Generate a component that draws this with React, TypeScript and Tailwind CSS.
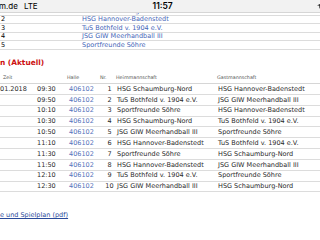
export default function App() {
  const top = [
    { n: "2", t: "HSG Hannover-Badenstedt" },
    { n: "3", t: "TuS Bothfeld v. 1904 e.V." },
    { n: "4", t: "JSG GIW Meerhandball III" },
    { n: "5", t: "Sportfreunde Söhre" },
  ];
  const games = [
    ["01.2018", "09:30", "406102", "1", "HSG Schaumburg-Nord", "HSG Hannover-Badenstedt"],
    ["", "09:50", "406102", "2", "TuS Bothfeld v. 1904 e.V.", "JSG GIW Meerhandball III"],
    ["", "10:10", "406102", "3", "Sportfreunde Söhre", "HSG Hannover-Badenstedt"],
    ["", "10:30", "406102", "4", "HSG Schaumburg-Nord", "TuS Bothfeld v. 1904 e.V."],
    ["", "10:50", "406102", "5", "JSG GIW Meerhandball III", "Sportfreunde Söhre"],
    ["", "11:10", "406102", "6", "HSG Hannover-Badenstedt", "TuS Bothfeld v. 1904 e.V."],
    ["", "11:30", "406102", "7", "Sportfreunde Söhre", "HSG Schaumburg-Nord"],
    ["", "11:50", "406102", "8", "HSG Hannover-Badenstedt", "JSG GIW Meerhandball III"],
    ["", "12:10", "406102", "9", "TuS Bothfeld v. 1904 e.V.", "Sportfreunde Söhre"],
    ["", "12:30", "406102", "10", "JSG GIW Meerhandball III", "HSG Schaumburg-Nord"],
  ];
  return (
    <div className="w-[320px] h-[240px] overflow-hidden bg-white font-['DejaVu_Sans',sans-serif] text-[#2a2a2a]">
      {/* status bar */}
      <div className="w-full h-[12.5px] bg-[#f2f2f2] border-b border-[#d6d6d6] flex items-center font-['Inter',sans-serif] text-black">
        <span className="text-[8px] leading-none ml-[-1px]">m.de</span>
        <span className="text-[8px] leading-none ml-[6px]">LTE</span>
        <span className="text-[8.5px] font-semibold leading-none ml-[115px]">11:57</span>
        <svg className="ml-auto mr-[-2px]" width="5" height="6" viewBox="0 0 5 6">
          <path d="M5 0 L0 2.6 L2.4 2.6 L2.4 6 Z" fill="#000" />
        </svg>
      </div>

      {/* partially scrolled-away first row */}
      <div className="h-[3px] overflow-hidden border-b border-[#dcdcdc]">
        <div className="mt-[-5px] h-[7px] flex items-center text-[6.5px] leading-none">
          <span className="w-[82px] pl-[1px] text-black">1</span>
          <span className="text-[#4565b8]">HSG Schaumburg-Nord</span>
        </div>
      </div>
      {top.map((r) => (
        <div key={r.n} className="h-[8.5px] border-b border-[#dcdcdc] flex items-center text-[6.5px] leading-none">
          <span className="w-[82px] pl-[1px] text-black">{r.n}</span>
          <span className="text-[#4565b8]">{r.t}</span>
        </div>
      ))}

      <div className="mt-[9px] h-[9px] flex items-center text-[7.4px] font-bold leading-none text-[#cc1111]">
        n (Aktuell)
      </div>

      <div className="mt-[5.5px] h-[11px] border-b border-[#d6d6d6] flex items-center text-[4.8px] leading-none text-[#555]">
        <span className="w-[67px] pl-[3px]">Zeit</span>
        <span className="w-[33px]">Halle</span>
        <span className="w-[16px]">Nr.</span>
        <span className="w-[101px]">Heimmannschaft</span>
        <span>Gastmannschaft</span>
      </div>

      {games.map((g) => (
        <div key={g[3]} className="h-[10.85px] border-b border-[#dcdcdc] flex items-center text-[6.5px] leading-none">
          <span className="w-[37px]">{g[0]}</span>
          <span className="w-[32px]">{g[1]}</span>
          <span className="w-[33px] text-[#5573bb]">{g[2]}</span>
          <span className="w-[15px] text-center">{g[3]}</span>
          <span className="w-[101px]">{g[4]}</span>
          <span>{g[5]}</span>
        </div>
      ))}

      <div className="mt-[18.5px] text-[6.5px] leading-[8px] text-[#2a4a9a] underline">
        e und Spielplan (pdf)
      </div>
    </div>
  );
}
